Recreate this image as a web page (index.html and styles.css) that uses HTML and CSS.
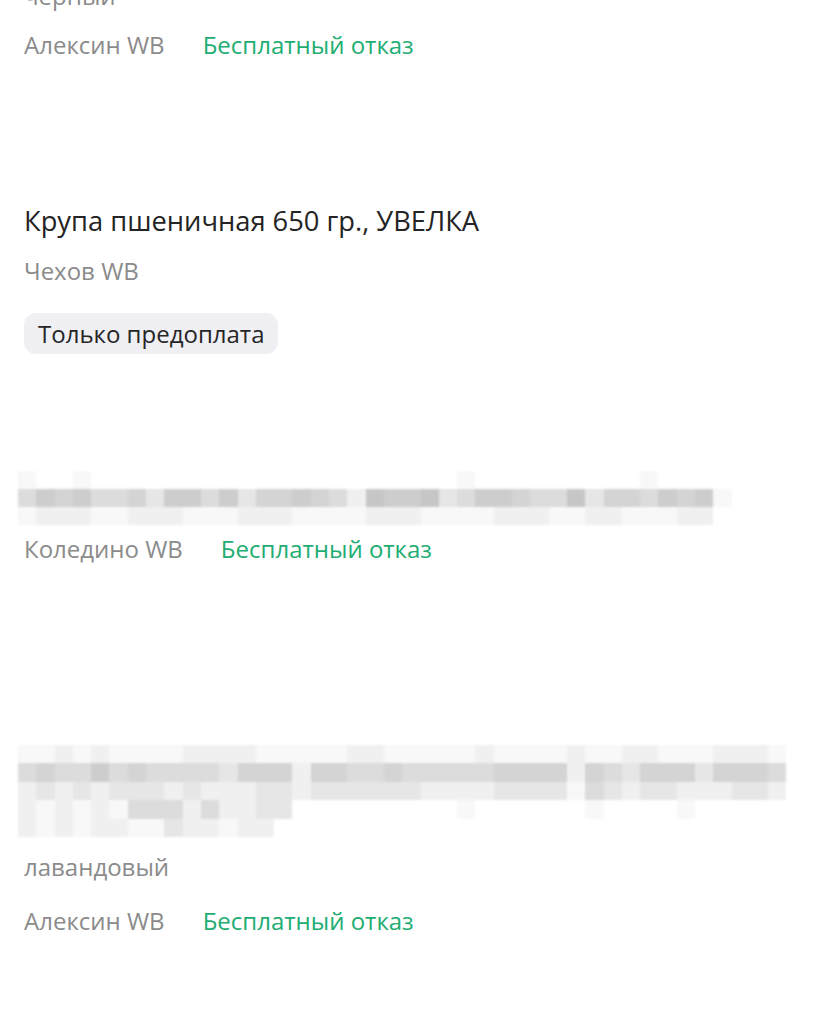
FILE: index.html
```html
<!DOCTYPE html>
<html lang="ru">
<head>
  <meta charset="UTF-8">
  <title>Заказы</title>
  <meta name="viewport" content="width=device-width, initial-scale=1.0">
  <link rel="stylesheet" href="styles.css">
</head>
<body>
  <main class="list">
    <section class="item item-first">
      <div class="color">черный</div>
      <div class="meta"><span class="place">Алексин WB</span><span class="refund">Бесплатный отказ</span></div>
    </section>

    <section class="item item-wheat">
      <h2 class="title">Крупа пшеничная 650 гр., УВЕЛКА</h2>
      <div class="meta"><span class="place">Чехов WB</span></div>
      <span class="badge">Только предоплата</span>
    </section>

    <section class="item item-hidden">
      <div class="mosaic mosaic-short" data-rows="
        100100000000000000000000100000000010000
        465644536646355654276673466544735546561
        122211222111222111122211112221122111220
      "></div>
      <div class="meta"><span class="place">Коледино WB</span><span class="refund">Бесплатный отказ</span></div>
    </section>

    <section class="item item-lavender">
      <div class="mosaic mosaic-long" data-rows="
        112121111222211111221111121111211221112221
        454464544443555255445444445555254355535554
        232323332322233233333322223333143233222332
        212121444242233000000000100000010000100000
        212122113221220
      "></div>
      <div class="color">лавандовый</div>
      <div class="meta"><span class="place">Алексин WB</span><span class="refund">Бесплатный отказ</span></div>
    </section>
  </main>

  <script>
    // пикселизация скрытых названий
    document.querySelectorAll(".mosaic").forEach(function(m){
      var rows=m.dataset.rows.trim().split(/\s+/);
      var cols=0;
      rows.forEach(function(r){ if(r.length>cols) cols=r.length; });
      m.style.gridTemplateColumns="repeat("+cols+", var(--cell))";
      rows.forEach(function(r){
        for(var i=0;i<cols;i++){
          var c=document.createElement("span");
          c.className="px s"+(r[i]||"0");
          m.appendChild(c);
        }
      });
    });
  </script>
</body>
</html>
```

FILE: styles.css
```css
html, body {
  margin:0;
  padding:0;
  background:#fff;
}
body {
  font-family:"Open Sans", "Noto Sans", sans-serif;
  color:#242424;
}
.list {
  padding:0 24px;
  margin-top:-19px;
}
.item {
  display:flex;
  flex-direction:column;
  align-items:flex-start;
}
.title {
  margin:0;
  font-size:27.3px;
  line-height:34px;
  font-weight:400;
}
.color {
  font-size:24px;
  line-height:30px;
  color:#8b8b8b;
}
.meta {
  display:flex;
  margin-top:19px;
  font-size:24px;
  line-height:30px;
  color:#8b8b8b;
}
.refund {
  margin-left:38px;
  color:#21ad72;
}
.badge {
  margin-top:27px;
  padding:6px 14px;
  font-size:24px;
  line-height:29px;
  color:#262626;
  background:#efeff4;
  border-radius:12px;
}

/* отступы между карточками */
.item-wheat { margin-top:144px; }
.item-wheat .meta { margin-top:18px; }
.item-hidden { margin-top:117px; }
.item-hidden .meta { margin-top:9px; }
.item-lavender { margin-top:181px; }
.item-lavender .color { margin-top:15px; }
.item-lavender .meta { margin-top:24px; }

/* замазанное название товара */
.mosaic {
  --cell:18.3px;
  display:grid;
  margin-left:-6px;
  filter:blur(0.9px);
}
.mosaic-short { grid-auto-rows:18px; }
.mosaic-long { grid-auto-rows:18.4px; }
.px.s0 { background:#ffffff; }
.px.s1 { background:#f8f8f8; }
.px.s2 { background:#f0f0f0; }
.px.s3 { background:#e6e6e6; }
.px.s4 { background:#dcdcdc; }
.px.s5 { background:#d4d4d4; }
.px.s6 { background:#cdcdcd; }
.px.s7 { background:#c6c6c6; }
```
